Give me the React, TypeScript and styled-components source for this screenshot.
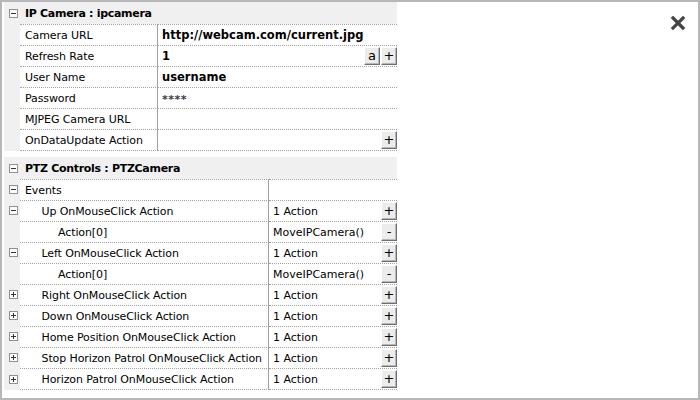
import React from "react";
import styled, { createGlobalStyle } from "styled-components";

const Global = createGlobalStyle`
  html, body { margin: 0; padding: 0; background: #fff; }
  body { font-family: "DejaVu Sans", Verdana, sans-serif; font-size: 11px; color: #000; }
  * { box-sizing: border-box; }
`;

const Frame = styled.div`
  width: 700px;
  height: 400px;
  border: 2px solid #b7b7b7;
  background: #fff;
  display: flex;
  align-items: flex-start;
  padding-left: 2px;
`;

const Grid = styled.div`
  width: 393px;
  display: flex;
  flex-direction: column;
  gap: 6px;
`;

const SectionBox = styled.div`
  display: flex;
  flex-direction: column;
  background: linear-gradient(to right, #f0f0f0 16px, #fff 16px);
`;

const Header = styled.div`
  height: 22px;
  background: #f0f0f0;
  display: grid;
  grid-template-columns: 16px 1fr;
  align-items: center;
`;

const HeaderText = styled.div`
  font-weight: bold;
  padding-left: 5px;
  letter-spacing: -0.3px;
`;

const Gutter = styled.div`
  display: flex;
  align-items: center;
  justify-content: center;
  height: 100%;
`;

const Box = styled.div`
  position: relative;
  width: 9px;
  height: 9px;
  border: 1px solid #919191;
  background: #fdfdfd;
  margin-left: 2px;
  &::before {
    content: "";
    position: absolute;
    left: 1px;
    top: 3px;
    width: 5px;
    height: 1px;
    background: #333;
  }
`;

const PlusBox = styled(Box)`
  &::after {
    content: "";
    position: absolute;
    left: 3px;
    top: 1px;
    width: 1px;
    height: 5px;
    background: #333;
  }
`;

const Row = styled.div<{ $label: number; $last?: boolean }>`
  display: grid;
  grid-template-columns: 16px ${(p) => p.$label}px 1fr;
  height: ${(p) => (p.$last ? 22 : 21)}px;
`;

const Cell = styled.div<{ $last?: boolean }>`
  border-top: 1px dotted #a3a3a3;
  border-bottom: ${(p) => (p.$last ? "1px dotted #a3a3a3" : "none")};
  display: flex;
  align-items: center;
  min-width: 0;
  white-space: nowrap;
  overflow: hidden;
`;

const LabelCell = styled(Cell)<{ $indent: number }>`
  border-right: 1px solid #a0a0a0;
  padding-left: ${(p) => 5 + p.$indent * 16.5}px;
  letter-spacing: -0.1px;
`;

const ValueCell = styled(Cell)`
  padding-left: 4px;
  justify-content: space-between;
`;

const Value = styled.span<{ $bold?: boolean }>`
  font-weight: ${(p) => (p.$bold ? "bold" : "normal")};
  font-size: ${(p) => (p.$bold ? "11.5px" : "11px")};
`;

const Masked = styled.span`
  font-weight: bold;
  font-size: 11px;
  color: #3a3a3a;
  letter-spacing: 0.5px;
  padding-top: 2px;
`;

const Buttons = styled.div`
  display: flex;
  gap: 1px;
  margin-left: auto;
`;

const Btn = styled.div`
  width: 16px;
  height: 18px;
  background: #ececec;
  border-style: solid;
  border-width: 1px;
  border-color: #fff #6f6f6f #6f6f6f #fff;
  box-shadow: inset -1px -1px 0 #b8b8b8;
  display: flex;
  align-items: center;
  justify-content: center;
  font-size: 13px;
  color: #000;
  line-height: 1;
  padding-bottom: 1px;
`;

const Close = styled.div`
  margin-left: auto;
  margin-top: 13px;
  margin-right: 12px;
  width: 16px;
  height: 16px;
`;

type RowData = {
  label: string;
  indent?: number;
  value?: string;
  bold?: boolean;
  masked?: boolean;
  box?: "minus" | "plus";
  buttons?: string[];
};

const Section: React.FC<{ title: string; labelWidth: number; rows: RowData[] }> = ({
  title,
  labelWidth,
  rows,
}) => (
  <SectionBox>
    <Header>
      <Gutter>
        <Box />
      </Gutter>
      <HeaderText>{title}</HeaderText>
    </Header>
    {rows.map((r, i) => {
      const last = i === rows.length - 1;
      return (
        <Row key={i} $label={labelWidth} $last={last}>
          <Gutter>{r.box === "minus" ? <Box /> : r.box === "plus" ? <PlusBox /> : null}</Gutter>
          <LabelCell $indent={r.indent ?? 0} $last={last}>
            {r.label}
          </LabelCell>
          <ValueCell $last={last}>
            {r.masked ? <Masked>{r.value}</Masked> : <Value $bold={r.bold}>{r.value}</Value>}
            {r.buttons && (
              <Buttons>
                {r.buttons.map((b, j) => (
                  <Btn key={j}>{b}</Btn>
                ))}
              </Buttons>
            )}
          </ValueCell>
        </Row>
      );
    })}
  </SectionBox>
);

const ipRows: RowData[] = [
  { label: "Camera URL", value: "http://webcam.com/current.jpg", bold: true },
  { label: "Refresh Rate", value: "1", bold: true, buttons: ["a", "+"] },
  { label: "User Name", value: "username", bold: true },
  { label: "Password", value: "****", masked: true },
  { label: "MJPEG Camera URL" },
  { label: "OnDataUpdate Action", buttons: ["+"] },
];

const ptzRows: RowData[] = [
  { label: "Events", box: "minus" },
  { label: "Up OnMouseClick Action", indent: 1, box: "minus", value: "1 Action", buttons: ["+"] },
  { label: "Action[0]", indent: 2, value: "MoveIPCamera()", buttons: ["-"] },
  { label: "Left OnMouseClick Action", indent: 1, box: "minus", value: "1 Action", buttons: ["+"] },
  { label: "Action[0]", indent: 2, value: "MoveIPCamera()", buttons: ["-"] },
  { label: "Right OnMouseClick Action", indent: 1, box: "plus", value: "1 Action", buttons: ["+"] },
  { label: "Down OnMouseClick Action", indent: 1, box: "plus", value: "1 Action", buttons: ["+"] },
  { label: "Home Position OnMouseClick Action", indent: 1, box: "plus", value: "1 Action", buttons: ["+"] },
  { label: "Stop Horizon Patrol OnMouseClick Action", indent: 1, box: "plus", value: "1 Action", buttons: ["+"] },
  { label: "Horizon Patrol OnMouseClick Action", indent: 1, box: "plus", value: "1 Action", buttons: ["+"] },
];

export default function App() {
  return (
    <>
      <Global />
      <Frame>
        <Grid>
          <Section title="IP Camera : ipcamera" labelWidth={138} rows={ipRows} />
          <Section title="PTZ Controls : PTZCamera" labelWidth={249} rows={ptzRows} />
        </Grid>
        <Close>
          <svg width="16" height="16" viewBox="0 0 16 16">
            <path d="M3 3 L13 13 M13 3 L3 13" stroke="#444" strokeWidth="3.2" strokeLinecap="square" />
          </svg>
        </Close>
      </Frame>
    </>
  );
}
